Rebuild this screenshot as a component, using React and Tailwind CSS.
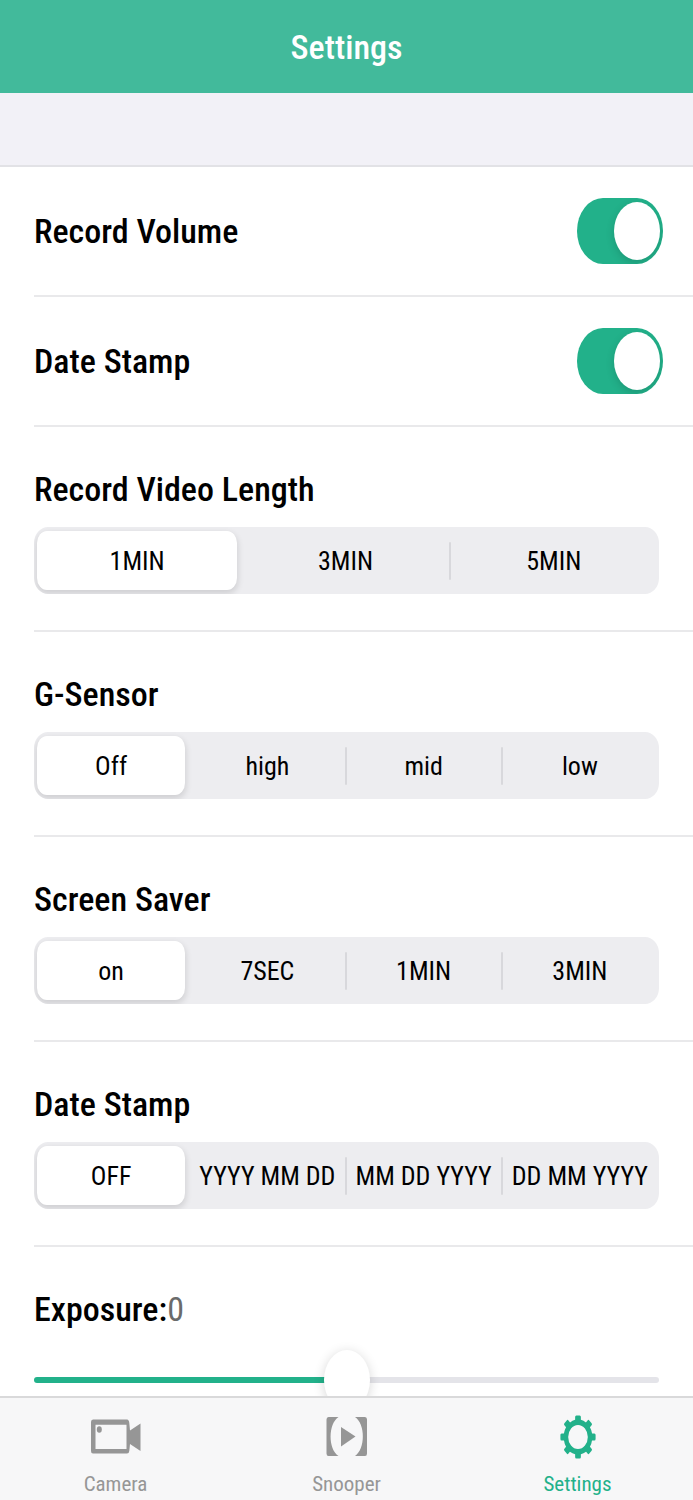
import { useId, useState } from "react";

const segments = [
  { title: "Record Video Length", options: ["1MIN", "3MIN", "5MIN"] },
  { title: "G-Sensor", options: ["Off", "high", "mid", "low"] },
  { title: "Screen Saver", options: ["on", "7SEC", "1MIN", "3MIN"] },
  { title: "Date Stamp", options: ["OFF", "YYYY MM DD", "MM DD YYYY", "DD MM YYYY"] }
];

function SwitchRow({ label }) {
  const id = useId();
  const [checked, setChecked] = useState(true);

  return (
    <div className="ml-[34px] flex h-[130px] items-center justify-between border-b-2 border-[#e9e9eb] pr-[30px]">
      <label htmlFor={id} className="text-[34px] leading-10 font-medium">
        {label}
      </label>
      <input
        id={id}
        type="checkbox"
        role="switch"
        checked={checked}
        onChange={(e) => setChecked(e.target.checked)}
        className="h-[66px] w-[86px] cursor-pointer appearance-none overflow-hidden rounded-[26px/33px] bg-[#e9e9eb] px-[3px] py-1 before:block before:h-[58px] before:w-[46px] before:rounded-[50%] before:bg-white before:shadow-[0_3px_8px_rgba(0,0,0,0.15)] checked:bg-[#22b18a] checked:before:ml-[34px]"
      />
    </div>
  );
}

function SegmentRow({ title, options }) {
  const id = useId();
  const [selected, setSelected] = useState(0);

  return (
    <div className="ml-[34px] h-[205px] border-b-2 border-[#e9e9eb] pt-[42px] pr-[34px]">
      <h2 id={id} className="text-[34px] leading-10 font-medium">
        {title}
      </h2>
      <div
        role="radiogroup"
        aria-labelledby={id}
        className="mt-[18px] flex h-[67px] overflow-hidden rounded-[14px/16px] bg-[#ededf0]"
      >
        {options.map((option, i) => (
          <label
            key={option}
            className="relative flex flex-1 cursor-pointer items-center justify-center text-[26px] leading-8 whitespace-nowrap"
          >
            {i > 0 && selected !== i && selected !== i - 1 && (
              <span className="absolute left-0 h-[38px] w-0.5 -translate-x-full rounded-full bg-[#d8d8dc]" />
            )}
            <input
              type="radio"
              name={id}
              checked={selected === i}
              onChange={() => setSelected(i)}
              className="absolute top-1 right-[5px] bottom-1 left-[3px] cursor-pointer appearance-none rounded-[10px/12px] checked:bg-white checked:shadow-[0_3px_6px_1px_rgba(0,0,0,0.12)]"
            />
            <span className="relative pr-0.5">{option}</span>
          </label>
        ))}
      </div>
    </div>
  );
}

function ExposureRow() {
  const id = useId();
  const [value, setValue] = useState(0);
  const percent = ((value + 6) / 12) * 100;

  return (
    <div className="ml-[34px] pt-[42px] pr-[34px] pb-10">
      <label htmlFor={id} className="block text-[34px] leading-10 font-medium">
        Exposure:<span className="font-normal text-[#6b6b6b]">{value}</span>
      </label>
      <div className="mt-[21px] flex h-[60px] items-center">
        <input
          id={id}
          type="range"
          min="-6"
          max="6"
          value={value}
          onChange={(e) => setValue(Number(e.target.value))}
          style={{
            backgroundImage: `linear-gradient(to right, #22b18a ${percent}%, #e4e4e9 ${percent}%)`
          }}
          className="h-[6px] w-full cursor-pointer appearance-none rounded-full [&::-webkit-slider-thumb]:h-[60px] [&::-webkit-slider-thumb]:w-[46px] [&::-webkit-slider-thumb]:appearance-none [&::-webkit-slider-thumb]:rounded-[50%] [&::-webkit-slider-thumb]:bg-white [&::-webkit-slider-thumb]:shadow-[0_2px_12px_rgba(0,0,0,0.16)]"
        />
      </div>
    </div>
  );
}

function CameraIcon() {
  return (
    <svg className="h-11 w-[54px]" viewBox="0 0 54 44" fill="currentColor" aria-hidden="true">
      <path
        fillRule="evenodd"
        d="M4 4.500H38Q40 4.500 40.300 8L41 15.500L51.500 8.500V36L41 29L40.300 36Q40 38.500 38 38.500H4Q2 38.500 2 36V7Q2 4.500 4 4.500ZM6.500 9.700V34H37.500V9.700Z"
      />
      <ellipse cx="10.300" cy="14.500" rx="2.500" ry="3.200" />
    </svg>
  );
}

function SnooperIcon() {
  return (
    <svg className="h-11 w-[54px]" viewBox="0 0 54 44" fill="currentColor" aria-hidden="true">
      <path d="M8.500 2H18.500C8 9 8 34 18.500 41H8.500Q6.500 41 6.500 38.500V4.500Q6.500 2 8.500 2Z" />
      <path d="M45 2H35C45.500 9 45.500 34 35 41H45Q47 41 47 38.500V4.500Q47 2 45 2Z" />
      <path d="M21 12L35.500 21.500L21 31.500Z" />
    </svg>
  );
}

function GearIcon() {
  const teeth = [0, 45, 90, 135, 180, 225, 270, 315];

  return (
    <svg
      className="h-11 w-9"
      viewBox="0 0 44 44"
      preserveAspectRatio="none"
      fill="currentColor"
      aria-hidden="true"
    >
      <path
        fillRule="evenodd"
        d="M22 4.500A17.500 17.500 0 1 1 22 39.500A17.500 17.500 0 1 1 22 4.500ZM22 10A12 12 0 1 0 22 34A12 12 0 1 0 22 10Z"
      />
      {teeth.map((angle) => (
        <rect key={angle} x="18.500" y="0.500" width="7" height="8" rx="1.500" transform={`rotate(${angle} 22 22)`} />
      ))}
    </svg>
  );
}

const tabs = [
  { name: "Camera", icon: CameraIcon },
  { name: "Snooper", icon: SnooperIcon },
  { name: "Settings", icon: GearIcon }
];

export default function App() {
  return (
    <div className="flex h-screen flex-col bg-white font-['Roboto_Condensed',Roboto,sans-serif] text-black">
      <header className="flex h-[93px] shrink-0 items-center justify-center bg-[#42ba9b]">
        <h1 className="text-[34px] leading-10 font-medium text-white">Settings</h1>
      </header>

      <main className="min-h-0 flex-1 overflow-y-auto [scrollbar-width:none]">
        <div className="h-[74px] border-b-2 border-[#e2e2e6] bg-[#f2f1f7]" />
        <SwitchRow label="Record Volume" />
        <SwitchRow label="Date Stamp" />
        {segments.map((item) => (
          <SegmentRow key={item.title} title={item.title} options={item.options} />
        ))}
        <ExposureRow />
      </main>

      <nav className="grid h-[104px] shrink-0 grid-cols-3 border-t-2 border-[#d9d9da] bg-[#f7f7f8]">
        {tabs.map(({ name, icon: Icon }) => (
          <a
            key={name}
            href={`#${name.toLowerCase()}`}
            className={
              name === "Settings"
                ? "flex flex-col items-center pt-[17px] text-[#22b18a]"
                : "flex flex-col items-center pt-[17px] text-[#969696]"
            }
          >
            <Icon />
            <span className="mt-3 text-[21px] leading-[26px]">{name}</span>
          </a>
        ))}
      </nav>
    </div>
  );
}
